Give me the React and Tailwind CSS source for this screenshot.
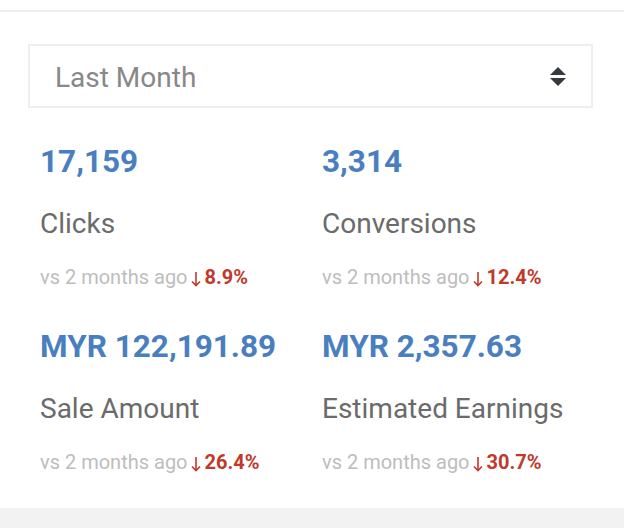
const stats = [
  { value: "17,159", label: "Clicks", change: "8.9%" },
  { value: "3,314", label: "Conversions", change: "12.4%" },
  { value: "MYR 122,191.89", label: "Sale Amount", change: "26.4%" },
  { value: "MYR 2,357.63", label: "Estimated Earnings", change: "30.7%" },
];

function SortIcon() {
  return (
    <svg width="16" height="19" viewBox="0 0 16 19" className="text-[#343a40]">
      <polygon points="8,0 16,8 0,8" fill="currentColor" />
      <polygon points="0,11 16,11 8,19" fill="currentColor" />
    </svg>
  );
}

function DownArrow() {
  return (
    <svg width="10" height="16" viewBox="0 0 10 16" className="text-[#c0392b] mt-[3px]" fill="none" stroke="currentColor" strokeWidth="1.6">
      <path d="M5 1 V14.5" />
      <path d="M1 10.5 L5 14.5 L9 10.5" />
    </svg>
  );
}

function StatCell({ stat }) {
  return (
    <div className="flex flex-col">
      <div className="text-[31.5px] leading-[36px] font-bold text-[#4a7fbf]">{stat.value}</div>
      <div className="mt-[26px] text-[28px] leading-[36px] text-[#6b6b6b]">{stat.label}</div>
      <div className="mt-[23px] text-[20px] leading-[24px] text-[#bdbdbd] flex items-center whitespace-nowrap">
        <span>vs 2 months ago</span>
        <span className="ml-[3px] flex"><DownArrow /></span>
        <span className="ml-[4px] font-bold text-[#c0392b]">{stat.change}</span>
      </div>
    </div>
  );
}

export default function App() {
  return (
    <div
      className="w-[624px] h-[528px] bg-white flex flex-col overflow-hidden"
      style={{ fontFamily: "Roboto, 'Liberation Sans', sans-serif" }}
    >
      <div className="h-[10px] shrink-0" />
      <div className="h-[2px] shrink-0 bg-[#eeeeee]" />
      <div className="flex-1 pl-[28px] pr-[31px] pt-[32px]">
        <div className="h-[64px] border-2 border-[#eeeeee] flex items-center justify-between pl-[25px] pr-[25px]">
          <span className="text-[28px] leading-[36px] mt-[4px] text-[#888888]">Last Month</span>
          <SortIcon />
        </div>
        <div className="grid grid-cols-[282px_1fr] gap-y-[40px] pl-[12px] pt-[36px]">
          {stats.map(function(s) {
            return <StatCell key={s.label} stat={s} />;
          })}
        </div>
      </div>
      <div className="h-[20px] shrink-0 bg-[#f2f2f2]" />
    </div>
  );
}
